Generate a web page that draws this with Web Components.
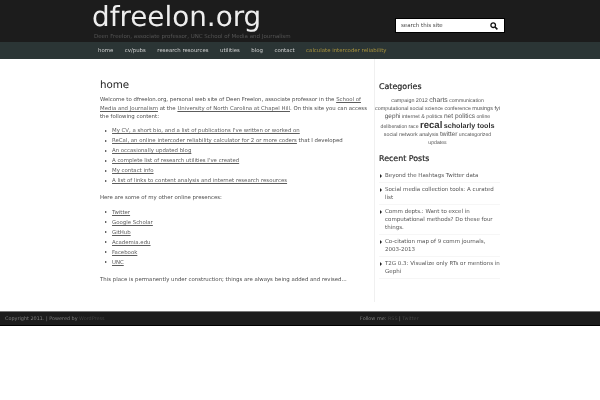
<!DOCTYPE html>
<html>
<head>
<meta charset="utf-8">
<title>dfreelon.org</title>
<style>
  html, body { margin: 0; padding: 0; background: #fff; }
  body { font-family: "DejaVu Sans", sans-serif; text-rendering: geometricPrecision; }
</style>
</head>
<body>
<site-header></site-header>
<site-nav></site-nav>
<page-main>
  <home-content></home-content>
  <side-bar></side-bar>
</page-main>
<site-footer></site-footer>

<script>
class SiteHeader extends HTMLElement {
  constructor () {
    super()
    this.shadow = this.attachShadow({ mode: 'open' })
  }

  connectedCallback () {
    this.shadow.innerHTML = /*html*/`
    <style>
      :host { display: flex; justify-content: space-between; height: 42px; background: #1c1c1c; padding: 0 95px 0 92px; }
      .brand { display: flex; flex-direction: column; will-change: opacity; }
      h1 { margin: 0; font-size: 27.8px; line-height: 33px; font-weight: normal; color: #eee; }
      p { margin: 0; font-size: 5.5px; line-height: 9px; color: #555; white-space: nowrap; padding-left: 2px; }
      form { display: flex; align-items: center; justify-content: space-between; box-sizing: border-box; width: 110px; height: 15px; margin-top: 18px; background: #fff; border: 1px solid #000; padding: 0 6px 0 5px; }
      span { font-size: 5.5px; color: #444; will-change: opacity; }
      svg { display: block; }
    </style>
    <div class="brand">
      <h1>dfreelon.org</h1>
      <p>Deen Freelon, associate professor, UNC School of Media and Journalism</p>
    </div>
    <form>
      <span>search this site</span>
      <svg width="8" height="8" viewBox="0 0 8 8"><circle cx="3.2" cy="3.2" r="2.3" fill="none" stroke="#111" stroke-width="1.3"/><path d="M5 5l2.4 2.4" stroke="#111" stroke-width="1.6"/></svg>
    </form>
    `
  }
}

class SiteNav extends HTMLElement {
  constructor () {
    super()
    this.shadow = this.attachShadow({ mode: 'open' })
    this.data = ['home', 'cv/pubs', 'research resources', 'utilities', 'blog', 'contact']
  }

  connectedCallback () {
    this.shadow.innerHTML = /*html*/`
    <style>
      :host { display: flex; align-items: center; gap: 11.5px; height: 17px; background: #2b3535; padding-left: 98px; font-size: 5.4px; color: #d0d0d0; }
      span { will-change: opacity; }
      .hot { color: #a8923c; }
    </style>
    ${this.data.map(item => `<span>${item}</span>`).join('')}
    <span class="hot">calculate intercoder reliability</span>
    `
  }
}

class PageMain extends HTMLElement {
  constructor () {
    super()
    this.shadow = this.attachShadow({ mode: 'open' })
  }

  connectedCallback () {
    this.shadow.innerHTML = /*html*/`
    <style>
      :host { display: flex; height: 252px; padding-left: 100px; }
    </style>
    <slot></slot>
    `
  }
}

class HomeContent extends HTMLElement {
  constructor () {
    super()
    this.shadow = this.attachShadow({ mode: 'open' })
    this.content = [
      { link: 'My CV, a short bio, and a list of publications I\'ve written or worked on' },
      { link: 'ReCal, an online intercoder reliability calculator for 2 or more coders', rest: ' that I developed' },
      { link: 'An occasionally updated blog' },
      { link: 'A complete list of research utilities I\'ve created' },
      { link: 'My contact info' },
      { link: 'A list of links to content analysis and internet research resources' }
    ]
    this.presences = ['Twitter', 'Google Scholar', 'GitHub', 'Academia.edu', 'Facebook', 'UNC'].map(link => ({ link }))
  }

  list (items) {
    return `<ul>${items.map(i => `<li><a>${i.link}</a>${i.rest || ''}</li>`).join('')}</ul>`
  }

  connectedCallback () {
    this.shadow.innerHTML = /*html*/`
    <style>
      :host { display: block; width: 269px; padding-top: 19px; font-size: 5.4px; line-height: 8.7px; color: #4c4c4c; will-change: opacity; }
      h2 { margin: 0 0 4px; font-size: 10.3px; line-height: 14px; font-weight: normal; color: #222; }
      p { margin: 0; }
      a { color: #5c5c5c; text-decoration: underline; text-decoration-thickness: 0.5px; }
      ul { list-style: none; margin: 4px 0 7.5px; padding: 0 0 0 12px; }
      p + ul + p + ul { margin: 5.5px 0 8.5px; }
      li { position: relative; height: 10px; line-height: 10px; white-space: nowrap; }
      li::before { content: ''; position: absolute; left: -7px; top: 3.5px; border-left: 2.5px solid #333; border-top: 1.5px solid transparent; border-bottom: 1.5px solid transparent; }
    </style>
    <h2>home</h2>
    <p>Welcome to dfreelon.org, personal web site of Deen Freelon, associate professor in the <a>School of Media and Journalism</a> at the <a>University of North Carolina at Chapel Hill</a>. On this site you can access the following content:</p>
    ${this.list(this.content)}
    <p>Here are some of my other online presences:</p>
    ${this.list(this.presences)}
    <p>This place is permanently under construction; things are always being added and revised...</p>
    `
  }
}

class TagCloud extends HTMLElement {
  constructor () {
    super()
    this.shadow = this.attachShadow({ mode: 'open' })
    this.data = [
      ['campaign 2012', 5.35], ['charts', 6.85], ['communication', 5.15], ['computational social science', 5.35], ['conference', 5.35],
      ['musings', 5.55], ['fyi', 5.55], ['gephi', 6.4], ['internet &amp; politics', 5.35], ['net politics', 6.6], ['online', 5.15], ['deliberation', 5.15], ['race', 5.15],
      ['recal', 9.6, 1], ['scholarly tools', 7.2, 1], ['social network analysis', 5.35], ['twitter', 6.6], ['uncategorized', 5.15], ['updates', 5.15]
    ]
  }

  connectedCallback () {
    this.shadow.innerHTML = /*html*/`
    <style>
      :host { display: block; text-align: center; font-family: "Liberation Sans", sans-serif; font-size: 5px; line-height: 8.2px; color: #555; }
      .big { font-weight: bold; color: #333; }
    </style>
    ${this.data.map(t => `<span class="${t[2] ? 'big' : ''}" style="font-size:${t[1]}px">${t[0]}</span>`).join(' ')}
    `
  }
}

class SideBar extends HTMLElement {
  constructor () {
    super()
    this.shadow = this.attachShadow({ mode: 'open' })
    this.posts = [
      'Beyond the Hashtags Twitter data',
      'Social media collection tools: A curated list',
      'Comm depts.: Want to excel in computational methods? Do these four things.',
      'Co-citation map of 9 comm journals, 2003-2013',
      'T2G 0.3: Visualize only RTs or mentions in Gephi'
    ]
  }

  connectedCallback () {
    this.shadow.innerHTML = /*html*/`
    <style>
      :host { display: block; box-sizing: border-box; width: 132px; height: 243px; margin-left: 5px; padding: 22px 6px 0 0; border-left: 1px solid #f0f0f0; will-change: opacity; }
      h3 { margin: 0 0 0 4px; font-size: 7.9px; line-height: 11px; font-weight: normal; color: #222; -webkit-text-stroke: 0.2px #222; }
      tag-cloud { margin: 5px 0 5.5px; }
      ul { list-style: none; margin: 8px 0 0 4px; padding: 0; font-size: 5.5px; line-height: 8px; color: #555; }
      li { position: relative; padding: 0 0 2.5px 6px; margin-bottom: 2.5px; border-bottom: 1px solid #f6f6f6; }
      li::before { content: ''; position: absolute; left: 1px; top: 2px; border-left: 2.5px solid #222; border-top: 2px solid transparent; border-bottom: 2px solid transparent; }
    </style>
    <h3>Categories</h3>
    <tag-cloud></tag-cloud>
    <h3>Recent Posts</h3>
    <ul>${this.posts.map(p => `<li>${p}</li>`).join('')}</ul>
    `
  }
}

class SiteFooter extends HTMLElement {
  constructor () {
    super()
    this.shadow = this.attachShadow({ mode: 'open' })
  }

  connectedCallback () {
    this.shadow.innerHTML = /*html*/`
    <style>
      :host { display: flex; align-items: center; box-sizing: border-box; height: 15px; background: #1c1c1c; border-top: 1px solid #777; border-bottom: 1px solid #000; padding-left: 5px; font-size: 4.9px; color: #808080; }
      span { will-change: opacity; }
      .left { width: 355px; }
      i { font-style: normal; color: #444; }
    </style>
    <span class="left">Copyright 2011. | Powered by <i>WordPress</i></span>
    <span>Follow me: <i>RSS</i> | <i>Twitter</i></span>
    `
  }
}

customElements.define('site-header', SiteHeader)
customElements.define('site-nav', SiteNav)
customElements.define('page-main', PageMain)
customElements.define('home-content', HomeContent)
customElements.define('tag-cloud', TagCloud)
customElements.define('side-bar', SideBar)
customElements.define('site-footer', SiteFooter)
</script>
</body>
</html>
